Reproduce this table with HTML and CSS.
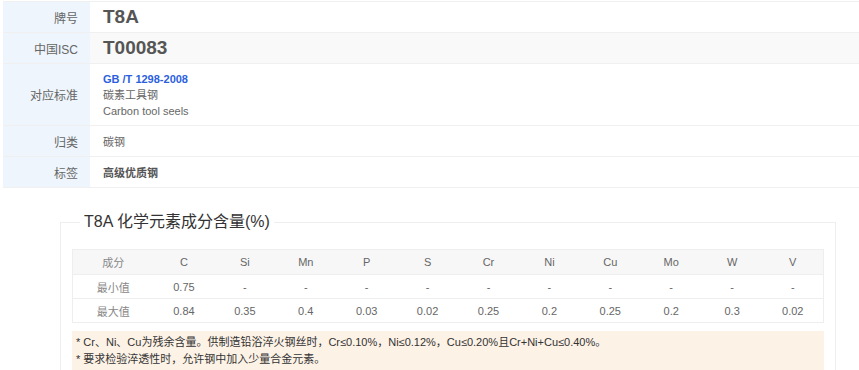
FILE: index.html
```html
<!DOCTYPE html>
<html lang="zh">
<head>
<meta charset="utf-8">
<title>T8A</title>
<link rel="stylesheet" href="styles.css">
</head>
<body>
<div class="page">
  <div class="info">
    <div class="row">
      <div class="label">牌号</div>
      <div class="value big">T8A</div>
    </div>
    <div class="row alt">
      <div class="label">中国ISC</div>
      <div class="value big">T00083</div>
    </div>
    <div class="row tall">
      <div class="label">对应标准</div>
      <div class="value stack">
        <a class="std" href="#">GB /T 1298-2008</a>
        <span>碳素工具钢</span>
        <span>Carbon tool seels</span>
      </div>
    </div>
    <div class="row">
      <div class="label">归类</div>
      <div class="value">碳钢</div>
    </div>
    <div class="row">
      <div class="label">标签</div>
      <div class="value strong">高级优质钢</div>
    </div>
  </div>

  <fieldset class="chem">
    <legend class="chem-title">T8A 化学元素成分含量(%)</legend>
    <table class="chem-table">
      <thead>
        <tr><th>成分</th><th>C</th><th>Si</th><th>Mn</th><th>P</th><th>S</th><th>Cr</th><th>Ni</th><th>Cu</th><th>Mo</th><th>W</th><th>V</th></tr>
      </thead>
      <tbody>
        <tr><td class="rh">最小值</td><td>0.75</td><td>-</td><td>-</td><td>-</td><td>-</td><td>-</td><td>-</td><td>-</td><td>-</td><td>-</td><td>-</td></tr>
        <tr><td class="rh">最大值</td><td>0.84</td><td>0.35</td><td>0.4</td><td>0.03</td><td>0.02</td><td>0.25</td><td>0.2</td><td>0.25</td><td>0.2</td><td>0.3</td><td>0.02</td></tr>
      </tbody>
    </table>
    <div class="note">
      <p>* Cr、Ni、Cu为残余含量。供制造铅浴淬火钢丝时，Cr≤0.10%，Ni≤0.12%，Cu≤0.20%且Cr+Ni+Cu≤0.40%。</p>
      <p>* 要求检验淬透性时，允许钢中加入少量合金元素。</p>
    </div>
  </fieldset>
</div>
</body>
</html>
```

FILE: styles.css
```css
* { box-sizing: border-box; }
html, body { margin: 0; padding: 0; background: #fff; }
body {
  font-family: "Liberation Sans", Arial, "Noto Sans CJK SC", sans-serif;
  color: #666;
  font-size: 11px;
}
.page { padding: 1px 0 0 3px; }

.info { border-top: 1px solid #f0f0f0; }
.row {
  display: grid;
  grid-template-columns: 87px 1fr;
  height: 31px;
  border-bottom: 1px solid #f0f0f0;
}
.row.alt .value { background: #f9f9f9; }
.row.tall { height: 62px; }
.label {
  background: #eef5fc;
  color: #666;
  font-size: 12px;
  text-align: right;
  padding-right: 12px;
  display: flex;
  align-items: center;
  justify-content: flex-end;
}
.value {
  padding-left: 13px;
  display: flex;
  align-items: center;
  color: #666;
  font-size: 11px;
}
.value.big { font-size: 19px; font-weight: bold; color: #555; }
.value.strong { font-weight: bold; color: #555; }
.value.stack {
  flex-direction: column;
  align-items: flex-start;
  justify-content: center;
  line-height: 16px;
}
.std { color: #2b5fe0; font-weight: bold; text-decoration: none; }

.chem {
  margin: 24px 0 0 57px;
  width: 776px;
  border: 1px solid #eee;
  padding: 17px 11px 20px 11px;
  min-width: 0;
}
.chem-title {
  font-size: 16px;
  color: #333;
  padding: 0 4px;
  margin-left: 8px;
  line-height: 20px;
}
.chem-table {
  width: 752px;
  border-collapse: collapse;
  border: 1px solid #eee;
  table-layout: fixed;
}
.chem-table th:first-child { width: 81px; }
.chem-table th, .chem-table td {
  height: 24px;
  padding: 0;
  text-align: center;
  font-size: 11px;
  color: #666;
  font-weight: normal;
  border-bottom: 1px solid #eee;
}
.chem-table thead th { background: #f7f7f7; height: 25px; }
.chem-table thead th:first-child, .chem-table .rh { color: #888; }
.note {
  margin-top: 8px;
  background: #fdf2e6;
  padding: 3px 4px 6px;
  color: #333;
  font-size: 11px;
  line-height: 17px;
}
.note p { margin: 0; }
```
